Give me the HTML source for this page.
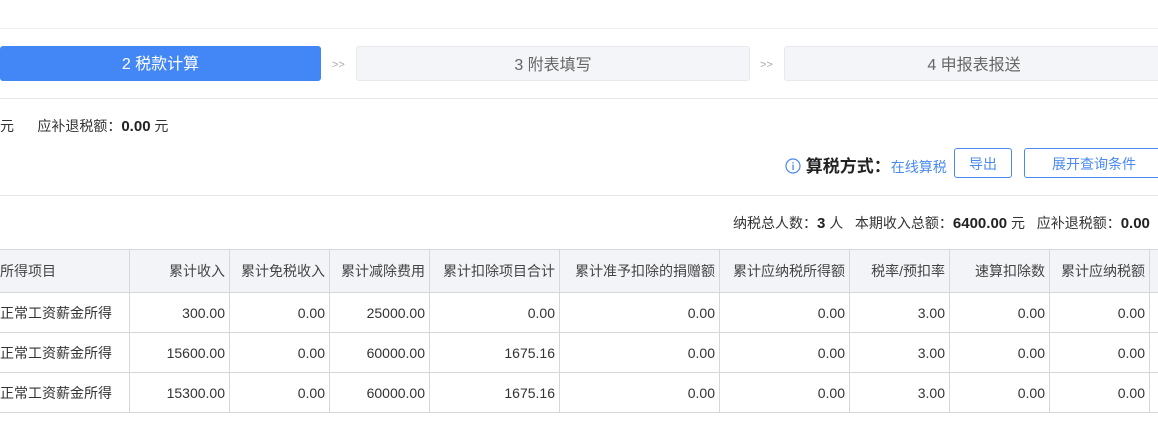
<!DOCTYPE html>
<html><head><meta charset="utf-8"><style>
body{margin:0;width:1158px;height:427px;overflow:hidden;background:#fff;font-family:"Liberation Sans","Noto Sans CJK SC",sans-serif;color:#333;position:relative;font-size:14px}
.a{position:absolute;white-space:nowrap}
.hl{position:absolute;left:0;width:1158px;height:1px;background:#e6e6e6}
.step{position:absolute;top:46px;height:35px;line-height:37px;text-align:center;font-size:16px;border-radius:3px}
.g{background:#f4f5f8;border:1px solid #e8e9ee;color:#666;box-sizing:border-box}
.arr{position:absolute;top:59px;font-size:11px;color:#aaa}
table{position:absolute;left:-1px;top:249px;border-collapse:collapse;table-layout:fixed;width:1170px}
td{border:1px solid #d6d6dc;height:39px;padding:0 4px;text-align:right;font-size:14px;color:#333;white-space:nowrap;overflow:hidden}
tr.h td{background:#f3f4f7;height:42px;color:#444}
td.l{text-align:left;padding-left:0}
.btn{position:absolute;top:148px;height:30px;border:1px solid #4a8af0;border-radius:3px;color:#4a8af0;text-align:center;line-height:30px;box-sizing:border-box;font-size:14px}
b{font-size:15px;color:#222}
</style></head><body>
<div class="hl" style="top:28px;background:#f0f0f0"></div>
<div class="step" style="left:0;width:321px;background:#4386f5;color:#fff">2 税款计算</div>
<div class="arr" style="left:332px">&gt;&gt;</div>
<div class="step g" style="left:356px;width:394px">3 附表填写</div>
<div class="arr" style="left:760px">&gt;&gt;</div>
<div class="step g" style="left:784px;width:380px">4 申报表报送</div>
<div class="hl" style="top:98px"></div>
<div class="a" style="left:0;top:116px">元 &nbsp;&nbsp;&nbsp;&nbsp; 应补退税额：<b>0.00</b> 元</div>
<div class="a" style="left:785px;top:152px;font-size:16px;color:#222"><svg width="16" height="16" viewBox="0 0 16 16" style="vertical-align:-2px"><circle cx="8" cy="8" r="7" fill="none" stroke="#4a8af0" stroke-width="1.2"/><rect x="7.4" y="6.5" width="1.3" height="5.5" fill="#4a8af0"/><rect x="7.4" y="4" width="1.3" height="1.4" fill="#4a8af0"/></svg><b style="font-size:17px"> 算税方式：</b><span style="color:#4a8af0;font-size:14px">在线算税</span></div>
<div class="btn" style="left:954px;width:58px">导出</div>
<div class="btn" style="left:1024px;width:140px">展开查询条件</div>
<div class="hl" style="top:195px"></div>
<div class="a" style="left:733px;top:213px">纳税总人数：<b>3</b> 人 &nbsp; 本期收入总额：<b>6400.00</b> 元 &nbsp; 应补退税额：<b>0.00</b></div>
<table>
<colgroup><col style="width:130px"><col style="width:100px"><col style="width:100px"><col style="width:100px"><col style="width:130px"><col style="width:160px"><col style="width:130px"><col style="width:100px"><col style="width:100px"><col style="width:100px"><col style="width:20px"></colgroup>
<tr class="h"><td class="l">所得项目</td><td>累计收入</td><td>累计免税收入</td><td>累计减除费用</td><td>累计扣除项目合计</td><td>累计准予扣除的捐赠额</td><td>累计应纳税所得额</td><td>税率/预扣率</td><td>速算扣除数</td><td>累计应纳税额</td><td></td></tr>
<tr><td class="l">正常工资薪金所得</td><td>300.00</td><td>0.00</td><td>25000.00</td><td>0.00</td><td>0.00</td><td>0.00</td><td>3.00</td><td>0.00</td><td>0.00</td><td></td></tr>
<tr><td class="l">正常工资薪金所得</td><td>15600.00</td><td>0.00</td><td>60000.00</td><td>1675.16</td><td>0.00</td><td>0.00</td><td>3.00</td><td>0.00</td><td>0.00</td><td></td></tr>
<tr><td class="l">正常工资薪金所得</td><td>15300.00</td><td>0.00</td><td>60000.00</td><td>1675.16</td><td>0.00</td><td>0.00</td><td>3.00</td><td>0.00</td><td>0.00</td><td></td></tr>
</table>
</body></html>
